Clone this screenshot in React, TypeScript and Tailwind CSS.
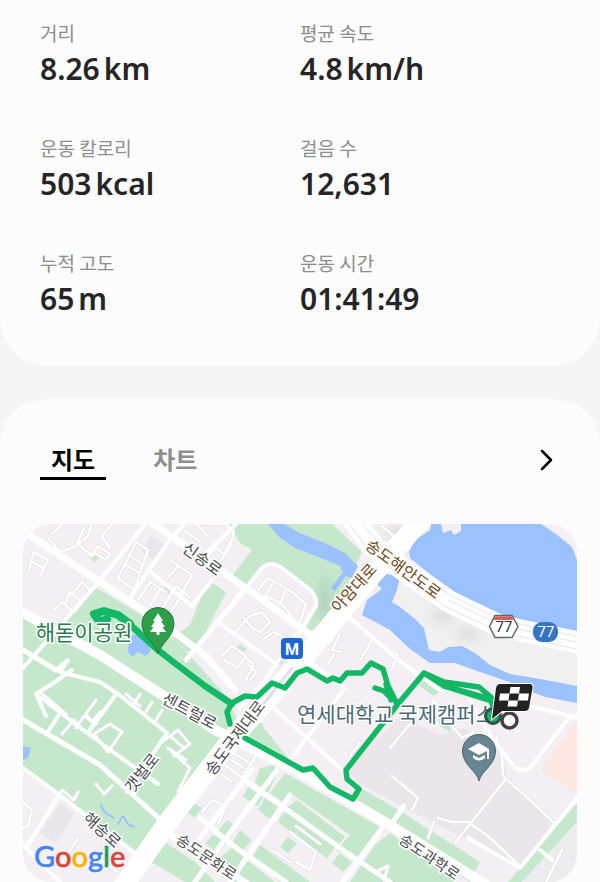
import clsx from 'clsx'
import { useState } from 'react'

interface Stat {
    label: string
    value: string
    unit?: string
}

const stats: Stat[] = [
    { label: '거리', value: '8.26', unit: 'km' },
    { label: '평균 속도', value: '4.8', unit: 'km/h' },
    { label: '운동 칼로리', value: '503', unit: 'kcal' },
    { label: '걸음 수', value: '12,631' },
    { label: '누적 고도', value: '65', unit: 'm' },
    { label: '운동 시간', value: '01:41:49' },
]

const StatItem: React.FC<Stat> = ({ label, value, unit }) => {
    return (
        <div>
            <dt className="text-[19px] leading-7 text-[#8c8c8c]">{label}</dt>
            <dd className="flex gap-1 font-['Noto_Sans','Noto_Sans_CJK_KR',sans-serif] text-3xl leading-11 font-semibold text-[#252525]">
                <span>{value}</span>
                {unit && <span>{unit}</span>}
            </dd>
        </div>
    )
}

const GREEN = [
    // 해돋이공원
    'M97 588L58 624L23 612V768L60 795L137 853L165 818L200 770L238 722L228 698L185 650L150 620Z',
    'M229 524H332L362 552L345 590L322 630L305 630L317 605L312 590L272 563L258 569L246 586L232 576L252 550L240 543Z',
    'M208 580L226 592L202 640L188 652L172 638L190 625Z',
    'M255 710L264 728L293 764L248 742Z',
    'M359 787L392 806L480 862L470 882L356 803Z',
    'M260 768L272 765L279 770L268 793L255 783Z',
    'M248 787L263 797L258 806L243 797Z',
    'M265 798L278 807L270 819L258 810Z',
    'M285 773L380 827L355 860L337 850L350 835L293 795L284 803L270 793Z',
    'M297 800L345 837L338 845L288 807Z',
    'M285 810L335 847L327 858L278 822Z',
    'M227 820L237 827L230 838L217 832Z',
    'M240 830L252 840L243 850L233 842Z',
    'M260 845L310 882H280L252 858Z',
    'M288 837L297 843L288 853L280 847Z',
    'M340 853L352 862L343 872L332 863Z',
    'M390 833L455 882H350L375 845Z',
    'M213 835L227 843L217 853L205 843Z',
    'M232 848L275 882H235L220 857Z',
    'M157 837L195 862L215 882H185L148 860Z',
    'M192 802L202 808L195 818L187 812Z',
    'M577 803V822L522 882H508Z',
    'M93 553L99 558L95 562L89 557Z',
    'M166 586L172 590L168 594L163 590Z',
    'M240 644L247 649L243 653L237 648Z',
    'M424 675L442 690L434 696L418 685Z',
    'M438 718L452 722L450 732L440 726Z',
]

const BLOCKS = [
    'M150 536L168 544L156 562L142 552Z',
    'M208 585L225 597L200 625L195 610Z',
    'M252 551L268 562L246 586L232 576Z',
    'M127 735L145 745L130 762L115 752Z',
    'M153 775L172 793L160 817L130 795Z',
    'M60 803L75 813L57 843L40 833Z',
    'M400 716L440 735L462 728L500 745L508 782L553 822L522 868L432 822L358 783L348 768Z',
]

const WATER = [
    'M268 524H284L300 533L325 543L345 553L358 566L352 578L346 576L335 591L331 588L343 572L340 566L318 557L295 548L279 537Z',
    'M370 577L378 572L400 577L397 590L392 602L400 607L415 619L424 628L429 650L440 652L448 647L462 646L475 653L490 665L510 674L540 679L577 686V703L545 697L530 691L515 684L480 672L455 663L430 663L410 649L390 630L362 615L367 600L382 589Z',
    'M431 524H441L443 533L451 530L454 535L461 531V524H541L556 534L572 547L577 560V636L530 624L500 617L480 607L455 592L430 574L410 558L409 552L415 540L430 530Z',
    'M129 636L142 634L151 650L146 656L138 652L132 657L128 652Z',
    'M23 746L31 748L28 758L23 760Z',
]

const STREETS = [
    'M52 534L62 524M48 538L60 552L76 546L84 528M92 524L88 536L78 544L92 556L98 546L110 554L106 560L96 554M102 536L112 524M102 536L110 548',
    'M28 572L34 552L48 560L40 576M32 562L44 568M54 610L62 602L74 612L82 602L70 592L66 602M82 602L90 590L82 582L72 594',
    'M118 578L136 542L148 550L134 590ZM126 565L138 572M130 556L142 564',
    'M138 600L150 582L166 592M150 606L160 590M160 612L176 586L190 598M168 616L184 592',
    'M170 560L192 575L180 596M178 566L166 580M184 530L200 542M196 524L208 536',
    'M200 524H226L234 532L230 548L212 572M204 560L216 548L224 554L230 542',
    'M258 590L268 578L292 592L306 604L300 622M264 596L280 602L292 616M272 584L264 600M286 590L280 604',
    'M232 636L250 616L262 612L270 622L260 632L252 628L244 618M262 640L274 632L286 638L282 652',
    'M222 656L232 646L246 656L238 668L224 660M246 680L254 664L246 658M248 664L256 672L250 680',
    'M96 700L86 714L92 722L100 712M40 692L66 714M76 728L84 716L96 724M62 734L74 720L84 732M94 734L110 724L122 732L108 752Z',
    'M126 694L140 706M134 704L140 694M146 712L152 702M156 720L162 710M162 742L178 730L190 744L174 756M168 748L186 760M170 736L184 748',
    'M190 768L178 792M190 768L172 752M96 784L104 794L112 786M108 774L122 784M62 790L74 800L78 792',
    'M23 802L32 810L28 826L23 828M110 840L100 860L118 872M78 838L62 862',
    'M222 762L240 740L258 752L242 778ZM228 758L244 768M232 752L248 762M216 770L232 782M202 812L212 800L226 806L218 824',
    'M334 654L328 664M340 634L332 650L342 652M372 640L360 660M398 654L390 672M350 756L360 742M345 678L355 668',
    'M272 850L290 862M290 832L316 852L310 870L296 862M296 826L320 844',
    'M390 748L410 724M392 776L418 798L412 810M434 822L428 838M438 818L452 822L468 822L488 836L520 866M505 780L455 843M496 736L502 756L503 776L530 800L553 822M432 700L440 706L450 706M450 724L462 738L474 732',
    'M376 872L388 866L384 880M562 850L546 882M382 526L398 540',
]

const ROADS = [
    { width: 4, d: 'M23 668L98 583L150 518M130 598L168 542L190 518M148 570L192 606L212 580M23 768L60 795L140 857M60 793L28 845M23 845L60 882' },
    { width: 4, d: 'M246 588L262 568Q270 560 282 568L308 588Q318 596 316 606L300 632L262 684L240 708M218 622L276 664M200 560L236 524M330 640L342 622Q348 616 354 621L398 660L440 690M303 658L345 688M272 706L342 770M342 692L290 760' },
    { width: 4, d: 'M40 697L70 720L120 757L158 784M58 716L48 732M117 693L90 730M167 733L127 792M117 693L167 733M56 670L68 660L60 672L100 682L118 694M46 716L36 694L52 684L72 670' },
    { width: 5, d: 'M246 588L186 660M20 718L100 765L163 822M56 670L23 650M200 818L232 845L286 882M245 780L343 850L390 882M277 770L217 850L195 882M252 770L200 838M290 795L245 860L230 882M382 828L343 882M390 826L404 806' },
    { width: 4, d: 'M470 700L490 735L512 764Q520 774 530 768L570 716L577 718M570 716L530 706L500 698M577 798L520 868L468 838M540 850L552 860' },
    { width: 7, d: 'M28 534L100 582L155 618L206 656L235 690M136 512L200 556L246 588L312 636M167 833L210 858L250 886' },
    { width: 10, d: 'M18 610L100 655L170 700L215 730L300 772L390 825L485 884' },
    { width: 20, d: 'M430 510L372 575L325 632L285 680L235 735L168 822L122 888' },
    { width: 22, d: 'M345 510L375 548L410 575L450 602L500 626L580 643' },
]

const ROUTE =
    'M497 716L490 699L444 686L424 673L398 704L346 770L347 779L359 789L353 799L330 787L313 768L303 770L245 738M230 724L227 712L232 703L245 696L257 697L272 683L285 688L297 673L307 669L327 681L333 678L340 681L347 673L362 673L371 663L383 669L388 686L397 704M375 688L384 691L392 699M386 684L391 700M424 673L444 682L479 687L492 698M444 686L488 700'

interface MapLabelProps {
    x: number
    y: number
    size?: number
    rotate?: number
    className?: string
    children: string
}

const MapLabel: React.FC<MapLabelProps> = ({
    x,
    y,
    size = 16,
    rotate = 0,
    className = 'fill-[#4a4a4e]',
    children,
}) => {
    return (
        <text
            x={x}
            y={y}
            fontSize={size}
            transform={`rotate(${rotate} ${x} ${y})`}
            textAnchor="middle"
            dominantBaseline="central"
            stroke="#fff"
            strokeWidth={3}
            strokeLinejoin="round"
            paintOrder="stroke"
            className={className}
        >
            {children}
        </text>
    )
}

const RouteMap: React.FC = () => {
    return (
        <svg
            viewBox="23 524 554 358"
            role="img"
            aria-label="지도"
            className="block w-full rounded-[28px] bg-[#f3eff3]"
        >
            <defs>
                <filter id="soft">
                    <feGaussianBlur stdDeviation="6" />
                </filter>
            </defs>

            <path d="M400 560L480 612L577 640V690L490 665L430 650L400 605Z" fill="#f0f0f1" />
            <path d={BLOCKS.join('')} fill="#eae6ea" />
            <path d={GREEN.join('')} fill="#c5e8cd" />
            <path d="M577 720L541 770L577 794Z" fill="#fde8e1" />
            <path d={WATER.join('')} fill="#9cc1ff" />
            <path d="M577 824V882H522Z" fill="#ececef" />
            <g fill="#777" opacity="0.22" filter="url(#soft)">
                <ellipse cx="325" cy="600" rx="6" ry="24" />
                <ellipse cx="442" cy="616" rx="12" ry="5" />
                <ellipse cx="468" cy="634" rx="12" ry="5" />
                <ellipse cx="400" cy="535" rx="12" ry="8" />
            </g>

            <g fill="none" strokeLinejoin="round" strokeLinecap="round">
                <path d={STREETS.join('')} stroke="#e3dfe5" strokeWidth={4} />
                <path d={STREETS.join('')} stroke="#fff" strokeWidth={2.6} />
                {ROADS.map(({ width, d }) => (
                    <path key={d} d={d} stroke="#fff" strokeWidth={width} />
                ))}
                <path
                    d="M352 510L380 545L412 569L452 596L502 620L580 637M345 518L370 552L408 581L448 608L500 632L580 650M448 600L500 625L580 643"
                    stroke="#e4e4e8"
                    strokeWidth={1}
                />
                <path d="M292 668L262 706M300 640L280 664" stroke="#dfe0ea" strokeWidth={3} />
                <path d="M101 805L104 812L114 818M118 824L123 816L128 824L134 827" stroke="#9cc1ff" strokeWidth={2} />
                <path d={ROUTE} stroke="#12b866" strokeWidth={5.5} />
                <path d="M232 704L205 686L172 661L158 650L127 622" stroke="#12b866" strokeWidth={6.5} />
                <path d="M130 624L118 615L104 611L94 614L100 622L107 619" stroke="#12b866" strokeWidth={8} />
            </g>

            <MapLabel x={203} y={558} rotate={36}>신송로</MapLabel>
            <MapLabel x={404} y={568} rotate={36} className="fill-[#6f4518]">송도해안도로</MapLabel>
            <MapLabel x={353} y={587} rotate={-48} className="fill-[#6f4518]">아암대로</MapLabel>
            <MapLabel x={190} y={710} rotate={28}>센트럴로</MapLabel>
            <MapLabel x={234} y={737} rotate={-53}>송도국제대로</MapLabel>
            <MapLabel x={141} y={772} rotate={-52}>갯벌로</MapLabel>
            <MapLabel x={103} y={829} rotate={42}>해송로</MapLabel>
            <MapLabel x={207} y={856} size={15} rotate={34}>송도문화로</MapLabel>
            <MapLabel x={430} y={856} size={15} rotate={34}>송도과학로</MapLabel>
            <MapLabel x={84} y={631} size={21} className="fill-[#287a50]">해돋이공원</MapLabel>
            <MapLabel x={396} y={713} size={21} className="fill-[#4a6876]">연세대학교 국제캠퍼스</MapLabel>

            {/* park */}
            <path
                d="M158 654C156 644 142 637 142 623.500A16 16 0 0 1 174 623.500C174 637 160 644 158 654Z"
                fill="#2f9e4b"
                stroke="#1e7d3a"
                strokeWidth={1}
            />
            <path d="M158 613L153 621H155L151 627H153.500L150 632H156.500V635H159.500V632H166L162.500 627H165L161 621H163Z" fill="#fff" />

            {/* campus */}
            <path
                d="M479 781C477 771 462.500 765 462.500 751A16.500 16.500 0 0 1 495.500 751C495.500 765 481 771 479 781Z"
                fill="#698591"
                stroke="#496470"
                strokeWidth={1}
            />
            <path d="M479 743L468 749L479 755L487 751V759H489V749ZM473 755V758Q479 763 485 758V755L479 758Z" fill="#fff" />

            {/* subway */}
            <rect x="281" y="638" width="22" height="21" rx="4" fill="#1b67d6" />
            <text x="292" y="649" fontSize="16" textAnchor="middle" dominantBaseline="central" className="fill-white font-['Roboto',sans-serif] font-bold">
                M
            </text>

            {/* route shields */}
            <path d="M495 615.500H512L518 626.500L512 637.500H495L489.500 626.500Z" fill="#fff" stroke="#666" strokeWidth={1.5} />
            <path d="M495.500 616.300H511.500L513.500 620H493.500Z" fill="#d75f60" />
            <text x="504" y="627" fontSize="15" textAnchor="middle" dominantBaseline="central" className="fill-[#333] font-['Roboto',sans-serif]">
                77
            </text>
            <rect x="533" y="622" width="25" height="20" rx="9" fill="#3575c6" />
            <text x="546" y="632" fontSize="15" textAnchor="middle" dominantBaseline="central" className="fill-white font-['Roboto',sans-serif]">
                77
            </text>

            {/* start and finish */}
            <circle cx="493" cy="716" r="7.500" fill="#12b866" stroke="#3c4a48" strokeWidth={3} />
            <circle cx="509.500" cy="720.500" r="7.500" fill="#fff" stroke="#424242" strokeWidth={3.5} />
            <path
                d="M500 684H530Q533 684 532.500 688L529 708Q528 711 525 711H502L492 719L496 688Q497 684 500 684Z"
                fill="#222"
                stroke="#fff"
                strokeWidth={2}
                paintOrder="stroke"
            />
            <path d="M510.500 687H520L519 693.500H509.500ZM500 693.500H509.500L508.500 700.500H499ZM519 693.500H529L528 700.500H518ZM508.500 700.500H518L517 706.500H507.500Z" fill="#fff" />

            <text x="34" y="867" fontSize="29" strokeWidth={0.5} className="font-['Lato',sans-serif] font-medium">
                <tspan fill="#4285f4" stroke="#4285f4">G</tspan>
                <tspan fill="#dc4437" stroke="#dc4437">o</tspan>
                <tspan fill="#f4b400" stroke="#f4b400">o</tspan>
                <tspan fill="#4285f4" stroke="#4285f4">g</tspan>
                <tspan fill="#1e9d58" stroke="#1e9d58">l</tspan>
                <tspan fill="#dc4437" stroke="#dc4437">e</tspan>
            </text>
        </svg>
    )
}

const tabs = ['지도', '차트']

export default function App() {
    const [selected, setSelected] = useState('지도')

    return (
        <main className="flex flex-col gap-[34px] overflow-hidden bg-[#f5f5f5] font-['Noto_Sans_CJK_KR',sans-serif]">
            <section className="rounded-b-[46px] bg-[#fcfcfc] px-10 pt-[19px] pb-11">
                <dl className="grid grid-cols-2 gap-y-[43px]">
                    {stats.map((stat) => (
                        <StatItem key={stat.label} {...stat} />
                    ))}
                </dl>
            </section>

            <section className="rounded-t-[46px] bg-[#fcfcfc] pt-[42px]">
                <div className="flex items-center justify-between px-10">
                    <div role="tablist" className="flex gap-9">
                        {tabs.map((tab) => (
                            <button
                                key={tab}
                                role="tab"
                                aria-selected={selected === tab}
                                onClick={() => setSelected(tab)}
                                className={clsx(
                                    'border-b-3 px-[11px] text-2xl leading-9 font-bold',
                                    selected === tab
                                        ? 'border-black text-black'
                                        : 'border-transparent text-[#8e8e8e]'
                                )}
                            >
                                {tab}
                            </button>
                        ))}
                    </div>
                    <button aria-label="자세히" className="p-1.5">
                        <svg width="14" height="24" viewBox="0 0 14 24" fill="none" stroke="#000" strokeWidth="2.500" strokeLinecap="round" strokeLinejoin="round">
                            <path d="M2 2L11 11L2 20" />
                        </svg>
                    </button>
                </div>
                <div className="px-[23px] pt-11">
                    <RouteMap />
                </div>
            </section>
        </main>
    )
}
